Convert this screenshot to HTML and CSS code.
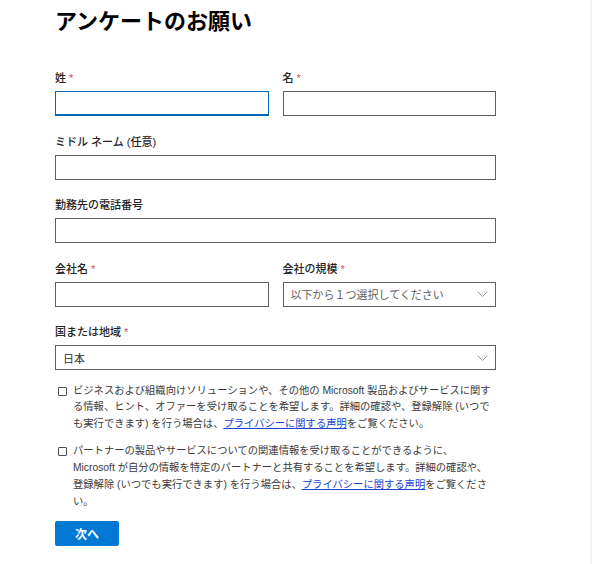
FILE: index.html
```html
<!DOCTYPE html>
<html lang="ja">
<head>
<meta charset="utf-8">
<title>アンケートのお願い</title>
<link rel="stylesheet" href="styles.css">
</head>
<body>
<div class="page">
  <h1 class="title">アンケートのお願い</h1>
  <form class="form">
    <div class="row">
      <div class="field">
        <label class="label">姓 <span class="req">*</span></label>
        <input class="input focused" type="text">
      </div>
      <div class="field">
        <label class="label">名 <span class="req">*</span></label>
        <input class="input" type="text">
      </div>
    </div>
    <div class="field">
      <label class="label">ミドル ネーム (任意)</label>
      <input class="input" type="text">
    </div>
    <div class="field">
      <label class="label">勤務先の電話番号</label>
      <input class="input" type="text">
    </div>
    <div class="row">
      <div class="field">
        <label class="label">会社名 <span class="req">*</span></label>
        <input class="input" type="text">
      </div>
      <div class="field">
        <label class="label">会社の規模 <span class="req">*</span></label>
        <div class="select placeholder">
          <span>以下から１つ選択してください</span>
          <svg class="chev" width="11" height="6" viewBox="0 0 11 6"><path d="M0.5 0.5 L5.5 5.5 L10.5 0.5" fill="none" stroke="#a19f9d" stroke-width="1"/></svg>
        </div>
      </div>
    </div>
    <div class="field">
      <label class="label">国または地域 <span class="req">*</span></label>
      <div class="select">
        <span>日本</span>
        <svg class="chev" width="11" height="6" viewBox="0 0 11 6"><path d="M0.5 0.5 L5.5 5.5 L10.5 0.5" fill="none" stroke="#a19f9d" stroke-width="1"/></svg>
      </div>
    </div>
    <div class="check">
      <span class="box"></span>
      <p class="check-text">ビジネスおよび組織向けソリューションや、その他の Microsoft 製品およびサービスに関す<br>る情報、ヒント、オファーを受け取ることを希望します。詳細の確認や、登録解除 (いつで<br>も実行できます) を行う場合は、<a class="link" href="#">プライバシーに関する声明</a>をご覧ください。</p>
    </div>
    <div class="check check2">
      <span class="box"></span>
      <p class="check-text">パートナーの製品やサービスについての関連情報を受け取ることができるように、<br>Microsoft が自分の情報を特定のパートナーと共有することを希望します。詳細の確認や、<br>登録解除 (いつでも実行できます) を行う場合は、<a class="link" href="#">プライバシーに関する声明</a>をご覧くださ<br>い。</p>
    </div>
    <button class="btn" type="button">次へ</button>
  </form>
</div>
</body>
</html>
```
FILE: styles.css
```css
html, body {
  margin: 0;
  padding: 0;
  background: #fff;
}
body {
  font-family: "Liberation Sans", "Noto Sans CJK JP", sans-serif;
  color: #323130;
}
.page {
  box-sizing: border-box;
  width: 592px;
  min-height: 564px;
  border-right: 2px solid #f4f4f4;
  padding-left: 55px;
}
.title {
  margin: 0;
  padding-top: 4px;
  font-size: 22px;
  line-height: 30px;
  font-weight: 700;
  color: #000;
  font-family: "Noto Sans CJK JP", sans-serif;
}
.form {
  margin-top: 35px;
  width: 441px;
  display: flex;
  flex-direction: column;
}
.row {
  display: flex;
  gap: 14px;
}
.row .field {
  flex: 1;
  min-width: 0;
}
.field {
  display: flex;
  flex-direction: column;
  margin-bottom: 16.5px;
}
.label {
  font-size: 11px;
  line-height: 18px;
  font-weight: 500;
  color: #252423;
  margin-bottom: 4px;
}
.req {
  color: #c4515a;
  font-weight: 400;
}
.input {
  box-sizing: border-box;
  height: 25px;
  margin: 0;
  border: 1px solid #605e5c;
  border-radius: 0;
  padding: 0 8px;
  background: #fff;
  outline: none;
  font: inherit;
}
.input.focused {
  border: 1px solid #0067b8;
  border-bottom: 2px solid #0067b8;
}
.select {
  box-sizing: border-box;
  height: 25px;
  border: 1px solid #605e5c;
  padding: 0 4px 0 7px;
  display: flex;
  align-items: center;
  justify-content: space-between;
  font-size: 11px;
  color: #323130;
}
.select.placeholder {
  color: #605e5c;
}
.chev {
  display: block;
  margin-right: 3px;
}
.check {
  display: flex;
  align-items: flex-start;
  margin-top: -4px;
  margin-bottom: 10.5px;
}
.check2 {
  margin-top: 0;
  margin-bottom: 10px;
}
.box {
  flex: none;
  box-sizing: border-box;
  width: 9px;
  height: 9px;
  border: 1px solid #505050;
  border-radius: 1px;
  margin: 4px 6px 0 3px;
}
.check-text {
  margin: 0;
  font-size: 10.3px;
  line-height: 16.8px;
  color: #3b3a39;
  white-space: nowrap;
}
.link {
  color: #1a3fd6;
  text-decoration: underline;
}
.btn {
  align-self: flex-start;
  width: 64px;
  height: 25px;
  border: none;
  border-radius: 2px;
  background: #0078d4;
  color: #fff;
  font-family: "Noto Sans CJK JP", sans-serif;
  font-weight: 700;
  font-size: 12px;
  padding: 0;
}
```
